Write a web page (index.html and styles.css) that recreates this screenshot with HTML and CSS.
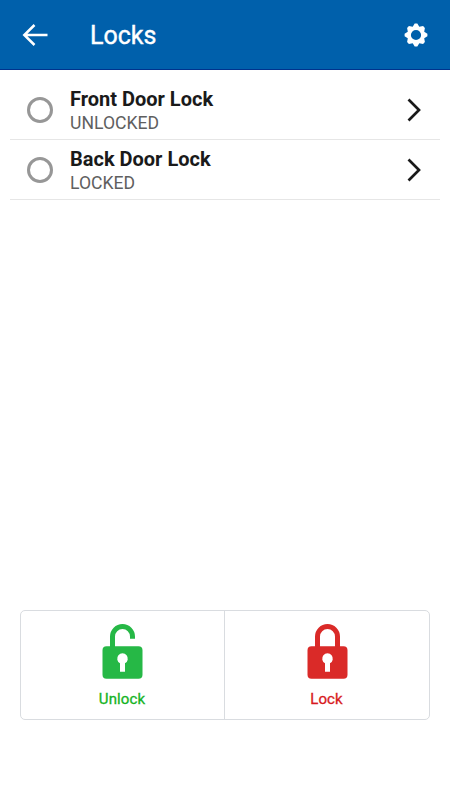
FILE: index.html
```html
<!DOCTYPE html>
<html lang="en">
    <head>
        <meta charset="utf-8">
        <title>Locks</title>
        <link rel="stylesheet" href="styles.css">
    </head>

    <body>
        <!-- Top bar -->
        <header class="topbar">
            <svg class="back" width="26" height="24" viewBox="0 0 26 24">
                <path d="M12.5 2L2.3 12L12.5 22M2.3 12H25.5"/>
            </svg>
            <h1>Locks</h1>
            <svg class="gear" width="24" height="24" viewBox="-12 -12 24 24">
                <path fill-rule="evenodd" d="M-1.3 -11.4H1.3L3.3 -8.2L7.1 -8.9L8.9 -7.1L8.2 -3.3L11.4 -1.3V1.3L8.2 3.3L8.9 7.1L7.1 8.9L3.3 8.2L1.3 11.4H-1.3L-3.3 8.2L-7.1 8.9L-8.9 7.1L-8.2 3.3L-11.4 1.3V-1.3L-8.2 -3.3L-8.9 -7.1L-7.1 -8.9L-3.3 -8.2ZM0 -5.1A5.1 5.1 0 1 0 0 5.1A5.1 5.1 0 1 0 0 -5.1Z"/>
            </svg>
        </header>

        <!-- Lock list -->
        <ul class="locks">
            <li>
                <span class="radio"></span>
                <div class="info">
                    <div class="name">Front Door Lock</div>
                    <div class="status">UNLOCKED</div>
                </div>
                <svg class="chevron" width="14" height="24" viewBox="0 0 14 24">
                    <path d="M1.5 1.5L12 12L1.5 22.5"/>
                </svg>
            </li>
            <li>
                <span class="radio"></span>
                <div class="info">
                    <div class="name">Back Door Lock</div>
                    <div class="status">LOCKED</div>
                </div>
                <svg class="chevron" width="14" height="24" viewBox="0 0 14 24">
                    <path d="M1.5 1.5L12 12L1.5 22.5"/>
                </svg>
            </li>
        </ul>

        <!-- Lock / unlock buttons -->
        <div class="actions">
            <div class="action unlock">
                <svg width="41" height="56" viewBox="0 0 41 56">
                    <path class="shackle" d="M10.5 24V12.5A10 10 0 0 1 30.5 12.5V14.8"/>
                    <path class="case" fill-rule="evenodd" d="M4.5 22.3H36.5Q40.5 22.3 40.5 26.3V50.7Q40.5 54.7 36.5 54.7H4.5Q.5 54.7 .5 50.7V26.3Q.5 22.3 4.5 22.3ZM18 39.3V47.7H23V39.3A5.3 5.3 0 1 0 18 39.3Z"/>
                </svg>
                <span>Unlock</span>
            </div>
            <div class="action lock">
                <svg width="41" height="56" viewBox="0 0 41 56">
                    <path class="shackle" d="M10.5 24V12.5A10 10 0 0 1 30.5 12.5V24"/>
                    <path class="case" fill-rule="evenodd" d="M4.5 22.3H36.5Q40.5 22.3 40.5 26.3V50.7Q40.5 54.7 36.5 54.7H4.5Q.5 54.7 .5 50.7V26.3Q.5 22.3 4.5 22.3ZM18 39.3V47.7H23V39.3A5.3 5.3 0 1 0 18 39.3Z"/>
                </svg>
                <span>Lock</span>
            </div>
        </div>
    </body>
</html>
```
FILE: styles.css
```css
* {
    box-sizing: border-box;
}
body {
    margin: 0;
    height: 100vh;
    display: flex;
    flex-direction: column;
    background-color: white;
    font-family: Roboto, sans-serif;
}

/* Top bar */
.topbar {
    height: 70px;
    padding: 1px 22px 0 22px;
    display: flex;
    align-items: center;
    background-color: #0060ab;
    border-bottom: 1px solid #00338d;
    color: white;
}
.topbar h1 {
    flex: 1;
    margin: 0 0 0 42px;
    padding-top: 1px;
    font-size: 25px;
    font-weight: 400;
    -webkit-text-stroke: 0.4px;
}
.back {
    fill: none;
    stroke: white;
    stroke-width: 2.5;
}
.gear {
    fill: white;
}

/* Lock list */
.locks {
    flex: 1;
    margin: 10px 10px 0;
    padding: 0;
    list-style: none;
}
.locks li {
    height: 60px;
    padding: 0 19px 0 17px;
    display: flex;
    align-items: center;
    border-bottom: 1px solid #e6e6e6;
}
.radio {
    width: 26px;
    height: 26px;
    border: 3px solid #979797;
    border-radius: 50%;
}
.info {
    flex: 1;
    margin-left: 17px;
    padding-top: 4px;
}
.name {
    font-size: 20px;
    line-height: 23px;
    font-weight: bold;
    color: #1a1a1a;
}
.status {
    font-size: 17.6px;
    line-height: 24px;
    color: #5f5f5f;
}
.chevron {
    fill: none;
    stroke: #1a1a1a;
    stroke-width: 2.7;
}

/* Lock / unlock buttons */
.actions {
    height: 110px;
    margin: 0 20px 80px;
    display: grid;
    grid-template-columns: 203px 1fr;
    border: 1px solid #d9dce0;
    border-radius: 5px;
}
.action {
    padding-top: 13px;
    display: flex;
    flex-direction: column;
    align-items: center;
    font-size: 15px;
}
.action span {
    margin: 10px 1px 0 0;
    line-height: 18px;
    letter-spacing: 0.1px;
    -webkit-text-stroke: 0.3px;
}
.action + .action {
    border-left: 1px solid #d9dce0;
}
.shackle {
    fill: none;
    stroke: currentColor;
    stroke-width: 5;
}
.case {
    fill: currentColor;
}
.unlock {
    color: #26b846;
}
.unlock span {
    color: #14b324;
}
.lock {
    color: #da2a28;
}
.lock span {
    color: #d71920;
}
```
